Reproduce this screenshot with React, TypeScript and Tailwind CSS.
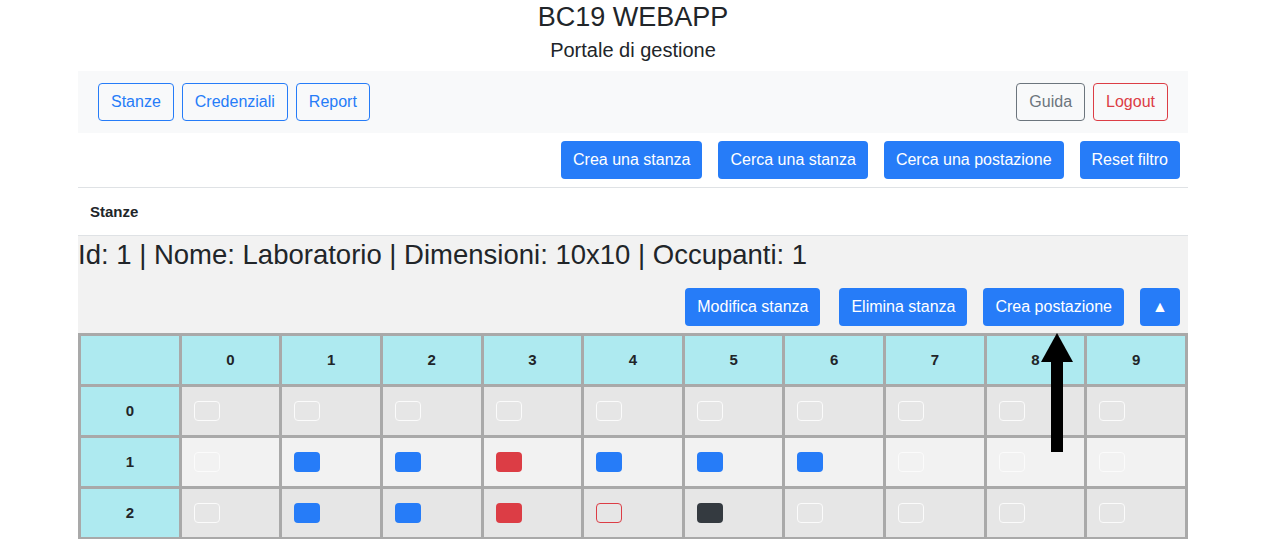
import React from "react";

type Seat = "empty" | "blue" | "red" | "dark" | "redOutline";

const cols = [0, 1, 2, 3, 4, 5, 6, 7, 8, 9];

// seat map of the room, row by row
const grid: Seat[][] = [
  ["empty", "empty", "empty", "empty", "empty", "empty", "empty", "empty", "empty", "empty"],
  ["empty", "blue", "blue", "red", "blue", "blue", "blue", "empty", "empty", "empty"],
  ["empty", "blue", "blue", "red", "redOutline", "dark", "empty", "empty", "empty", "empty"],
];

const seatCls: Record<Seat, string> = {
  empty: "border border-[#fbfbfb]",
  blue: "bg-[#267cf8]",
  red: "bg-[#dc3d45]",
  dark: "bg-[#343a40]",
  redOutline: "border border-[#dc3d45]",
};

function Btn({ children, className = "" }: { children: React.ReactNode; className?: string }) {
  return (
    <button className={`h-[38px] rounded px-3 text-[16px] leading-6 ${className}`}>{children}</button>
  );
}

function Primary({ children, className = "" }: { children: React.ReactNode; className?: string }) {
  return <Btn className={`bg-[#267cf8] text-white ${className}`}>{children}</Btn>;
}

export default function App() {
  return (
    <div className="min-h-screen bg-white text-[#212529]" style={{ fontFamily: '"Liberation Sans", Arial, sans-serif' }}>
      <div className="ml-[78px] w-[1110px]">
        <h3 className="pt-[1px] text-center text-[27px] leading-[32px]">BC19 WEBAPP</h3>
        <h5 className="mt-[5px] text-center text-[20px] font-medium leading-6">Portale di gestione</h5>

        {/* navbar */}
        <div className="mt-[9px] flex items-center justify-between bg-[#f8f9fa] px-5 py-3">
          <div className="flex gap-2">
            <Btn className="border border-[#267cf8] text-[#267cf8]">Stanze</Btn>
            <Btn className="border border-[#267cf8] text-[#267cf8]">Credenziali</Btn>
            <Btn className="border border-[#267cf8] text-[#267cf8]">Report</Btn>
          </div>
          <div className="flex gap-2">
            <Btn className="border border-[#6c757d] text-[#6c757d]">Guida</Btn>
            <Btn className="border border-[#dc3d45] text-[#dc3d45]">Logout</Btn>
          </div>
        </div>

        <div className="mt-2 flex justify-end gap-4 pr-2">
          <Primary>Crea una stanza</Primary>
          <Primary>Cerca una stanza</Primary>
          <Primary>Cerca una postazione</Primary>
          <Primary>Reset filtro</Primary>
        </div>

        <div className="mt-2 border-t border-b border-[#dfe2e5] px-3 py-[13px]">
          <div className="text-[15px] font-bold leading-[21px]">Stanze</div>
        </div>

        {/* room */}
        <div className="bg-[#f2f2f2]">
          <div className="pt-[3px] text-[27.5px] leading-[32px]">
            Id: 1 | Nome: Laboratorio | Dimensioni: 10x10 | Occupanti: 1
          </div>
          <div className="mt-[17px] flex justify-end gap-4 pr-2">
            <Primary className="mr-[3px] h-[37px]">Modifica stanza</Primary>
            <Primary className="h-[37px]">Elimina stanza</Primary>
            <Primary className="h-[37px]">Crea postazione</Primary>
            <Primary className="h-[37px] w-10 px-0 text-[15px]">▲</Primary>
          </div>

          <div className="relative mt-[7px]">
            <div className="grid grid-cols-11 gap-[3px] bg-[#a9a9a9] p-[3px]">
              <div className="h-12 bg-[#aeeaf0]" />
              {cols.map((c) => (
                <div key={c} className="flex h-12 items-center justify-center bg-[#aeeaf0] text-[15px] font-bold">
                  {c}
                </div>
              ))}
              {grid.map((row, r) => (
                <React.Fragment key={r}>
                  <div className="flex h-12 items-center justify-center bg-[#aeeaf0] text-[15px] font-bold">{r}</div>
                  {row.map((s, c) => (
                    <div
                      key={c}
                      className={`flex h-12 items-center pl-3 ${r % 2 === 1 ? "bg-[#f2f2f2]" : "bg-[#e6e6e6]"}`}
                    >
                      <div className={`h-5 w-[26px] rounded-[4px] ${seatCls[s]}`} />
                    </div>
                  ))}
                </React.Fragment>
              ))}
            </div>

            {/* pointer arrow */}
            <svg className="absolute left-[962px] top-0" width="34" height="120" viewBox="0 0 34 120">
              <polygon points="17,0 33,29 1,29" fill="#000" />
              <rect x="11" y="28" width="12" height="91" fill="#000" />
            </svg>
          </div>
        </div>
      </div>
    </div>
  );
}
